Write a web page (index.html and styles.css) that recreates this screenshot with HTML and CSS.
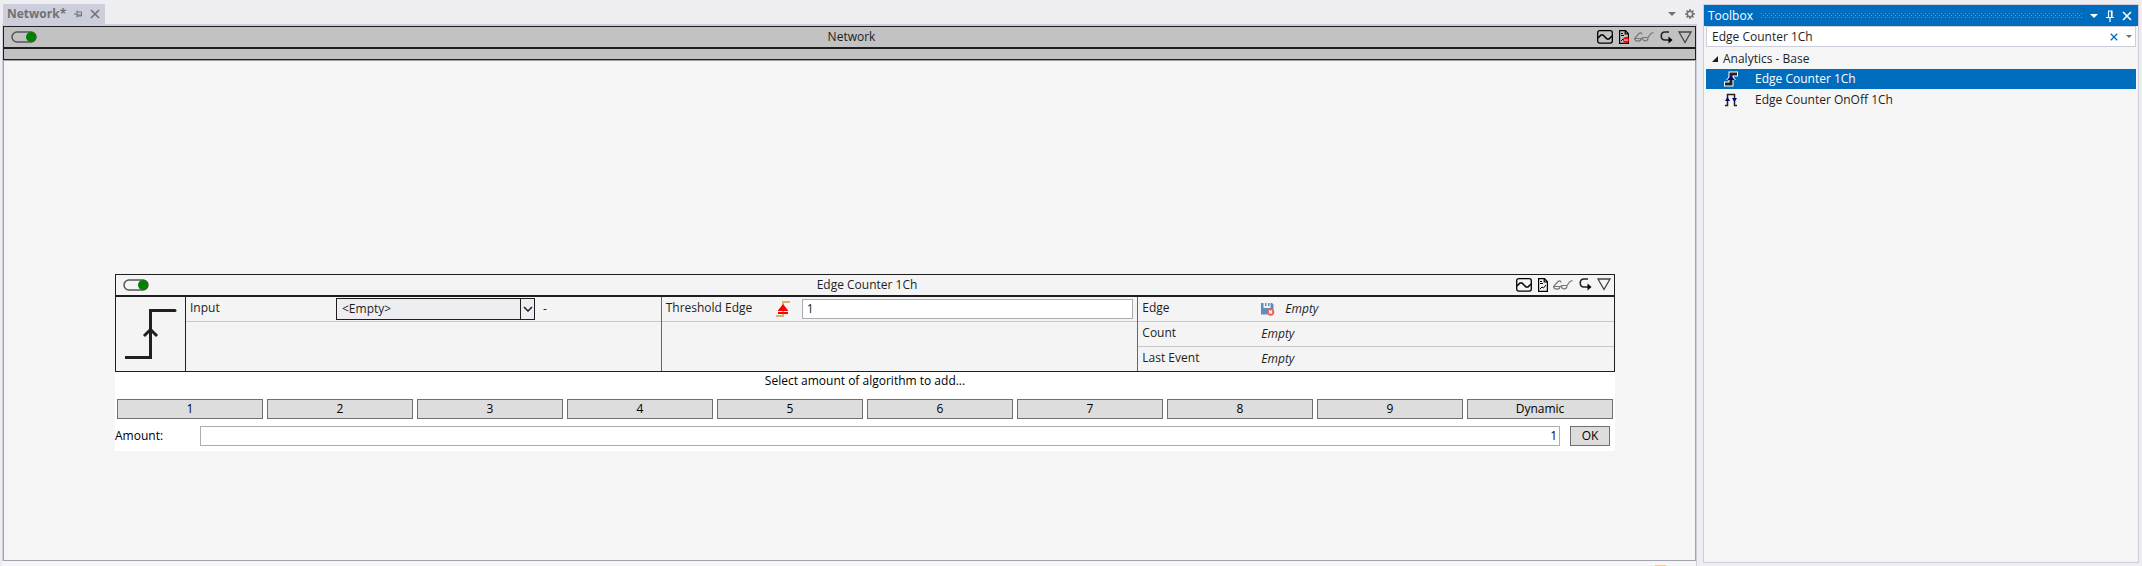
FILE: index.html
```html
<!DOCTYPE html>
<html lang="en">
<head>
    <meta charset="UTF-8">
    <meta name="viewport" content="width=device-width, initial-scale=1.0">
    <title>Network</title>
    <link rel="stylesheet" href="styles.css">
</head>
<body>
    <svg width="0" height="0" class="defs">
        <symbol id="toggle" viewBox="0 0 26 12">
            <rect x="1" y="1" width="24" height="10" rx="5" fill="none" stroke="#555" stroke-width="1.5"/>
            <circle cx="20" cy="6" r="5" fill="#008000"/>
        </symbol>
        <symbol id="wave" viewBox="0 0 16 14">
            <rect x="0.7" y="0.7" width="14.6" height="12.4" rx="2" fill="none" stroke="#000" stroke-width="1.3"/>
            <path d="M1 8L4 5H6L10 9H12L15 6" fill="none" stroke="#000" stroke-width="1.5"/>
        </symbol>
        <symbol id="report" viewBox="0 0 10 14">
            <path d="M0.6 0.6H6.5L9.4 3.8V13.4H0.6ZM6.2 1V4H9" fill="none" stroke="#000" stroke-width="1.2"/>
            <path d="M2 3.500H4M2 5.500H5M2 11L4 9L5.500 10L8 7" fill="none" stroke="#000"/>
        </symbol>
        <symbol id="glasses" viewBox="0 0 20 12">
            <path d="M0.500 7.500H7C7 11 1 11 0.500 7.500L5 2.500C6 1.500 8 1.500 8 3.500M7 7.500L9 6.500M8.500 6.500H14C14 11 8.500 11 8.500 6.500M14 6.500L17 2.500L19.500 1.500" fill="none" stroke="#777" stroke-width="1.2"/>
        </symbol>
        <symbol id="loop" viewBox="0 0 13 13">
            <path d="M9 1H5C0 1 0 9 5 9H9" fill="none" stroke="#222" stroke-width="1.6"/>
            <path d="M8.500 5.500L12.500 9L8.500 12.500Z" fill="#000"/>
        </symbol>
        <symbol id="triangle" viewBox="0 0 14 13">
            <path d="M1 1H13L7 11.500Z" fill="none" stroke="#444" stroke-width="1.3"/>
        </symbol>
        <symbol id="cross" viewBox="0 0 10 10">
            <path d="M1 1L9 9M9 1L1 9" fill="none" stroke="currentColor" stroke-width="1.6"/>
        </symbol>
        <symbol id="pin" viewBox="0 0 8 12">
            <path d="M2 1H6V7M2.500 1V7M0 7.500H8M4 7.500V12M5.500 1V7" fill="none" stroke="currentColor" stroke-width="1.2"/>
        </symbol>
    </svg>

    <main class="editor">
        <div class="tab-strip">
            <div class="tab">
                <span class="tab-title">Network*</span>
                <button class="icon-button" aria-label="Pin tab">
                    <svg width="8" height="8" viewBox="0 0 8 8"><path d="M0 4H3M3 0.500V7.500M3 2H7.500V6H3M3 5H7.500" fill="none" stroke="currentColor"/></svg>
                </button>
                <button class="icon-button" aria-label="Close tab"><svg width="10" height="10"><use href="#cross"/></svg></button>
            </div>
            <div class="strip-tools">
                <button class="icon-button" aria-label="Open documents"><svg width="8" height="4"><path d="M0 0H8L4 4Z" fill="#717171"/></svg></button>
                <button class="icon-button" aria-label="Options">
                    <svg width="10" height="10" viewBox="0 0 10 10"><circle cx="5" cy="5" r="2.700" fill="none" stroke="#717171" stroke-width="1.500"/><path d="M5 0V2M5 8V10M0 5H2M8 5H10M1.500 1.500L3 3M7 7L8.500 8.500M8.500 1.500L7 3M3 7L1.500 8.500" stroke="#717171" stroke-width="1.500"/></svg>
                </button>
            </div>
        </div>

        <section class="network">
            <header class="block-header">
                <button class="icon-button" aria-label="Enabled"><svg width="26" height="12"><use href="#toggle"/></svg></button>
                <h1 class="block-title">Network</h1>
                <div class="block-tools">
                    <svg width="16" height="14"><use href="#wave"/></svg>
                    <svg width="10" height="14"><use href="#report"/><circle cx="7" cy="10" r="3" fill="#f00"/><path d="M5 10H9" stroke="#fff"/></svg>
                    <svg width="20" height="12"><use href="#glasses"/></svg>
                    <svg width="13" height="13"><use href="#loop"/></svg>
                    <svg width="14" height="13"><use href="#triangle"/></svg>
                </div>
            </header>
            <div class="network-bar"></div>

            <div class="canvas">
                <article class="algorithm">
                    <header class="block-header">
                        <button class="icon-button" aria-label="Enabled"><svg width="26" height="12"><use href="#toggle"/></svg></button>
                        <h2 class="block-title">Edge Counter 1Ch</h2>
                        <div class="block-tools">
                            <svg width="16" height="14"><use href="#wave"/></svg>
                            <svg width="10" height="14"><use href="#report"/></svg>
                            <svg width="20" height="12"><use href="#glasses"/></svg>
                            <svg width="13" height="13"><use href="#loop"/></svg>
                            <svg width="14" height="13"><use href="#triangle"/></svg>
                        </div>
                    </header>
                    <div class="algorithm-body">
                        <div class="symbol">
                            <svg width="52" height="52" viewBox="0 0 52 52"><path d="M0 49.500H25.500V2.500H50M19 28L25.500 21.500L32 28" fill="none" stroke="#231f20" stroke-width="3"/><path d="M49 1H50a1 1 0 0 1 0 3H49" fill="#231f20"/></svg>
                        </div>
                        <div class="column">
                            <div class="row inputs">
                                <label for="input">Input</label>
                                <div class="combo">
                                    <select id="input"><option>&lt;Empty&gt;</option></select>
                                    <span class="combo-arrow"><svg width="10" height="6"><path d="M1 1L5 5L9 1" fill="none" stroke="#1e1e1e" stroke-width="1.500"/></svg></span>
                                </div>
                                <span class="unit">-</span>
                            </div>
                        </div>
                        <div class="column">
                            <div class="row params">
                                <label for="threshold">Threshold Edge</label>
                                <svg width="14" height="16" viewBox="0 0 14 16"><path d="M0 15H7V1H14" fill="none" stroke="#deb070" stroke-width="2"/><path d="M7 3L12.500 10H1.500ZM2 11H12V13H2Z" fill="#f00"/></svg>
                                <input id="threshold" type="text" value="1">
                            </div>
                        </div>
                        <div class="column">
                            <div class="row outputs">
                                <span>Edge</span>
                                <span class="value">
                                    <svg width="14" height="14" viewBox="0 0 14 14"><path d="M0 1H2.500V6H9.500V1H11L12.500 2.500V7H8L6 9V12.500H0Z" fill="#5b8fc0"/><path d="M4 1H5.500V4H4ZM7 1H8.500V4H7Z" fill="#5b8fc0"/><circle cx="9.500" cy="10" r="3.800" fill="#e5615d"/><path d="M8 8.500L11 11.500M11 8.500L8 11.500" stroke="#fff" stroke-width="1.300"/></svg>
                                    <em>Empty</em>
                                </span>
                            </div>
                            <div class="row outputs"><span>Count</span><span class="value"><em>Empty</em></span></div>
                            <div class="row outputs"><span>Last Event</span><span class="value"><em>Empty</em></span></div>
                        </div>
                    </div>
                </article>

                <form class="amount-panel">
                    <p class="prompt">Select amount of algorithm to add...</p>
                    <div class="amounts">
                        <button type="button">1</button>
                        <button type="button">2</button>
                        <button type="button">3</button>
                        <button type="button">4</button>
                        <button type="button">5</button>
                        <button type="button">6</button>
                        <button type="button">7</button>
                        <button type="button">8</button>
                        <button type="button">9</button>
                        <button type="button">Dynamic</button>
                    </div>
                    <div class="custom-amount">
                        <label for="amount">Amount:</label>
                        <input id="amount" type="text" value="1">
                        <button type="button">OK</button>
                    </div>
                </form>
            </div>
        </section>
        <div class="status"><span class="status-mark"></span></div>
    </main>

    <aside class="toolbox">
        <header class="toolbox-header">
            <h2>Toolbox</h2>
            <svg class="grip" height="5" width="100%">
                <pattern id="dots" width="4" height="4" patternUnits="userSpaceOnUse"><path d="M0 0h1v1H0zM2 2h1v1H2z" fill="#59a8de"/></pattern>
                <rect width="100%" height="5" fill="url(#dots)"/>
            </svg>
            <button class="icon-button" aria-label="Window position"><svg width="8" height="4"><path d="M0 0H8L4 4Z" fill="#fff"/></svg></button>
            <button class="icon-button" aria-label="Auto hide"><svg width="8" height="12"><use href="#pin"/></svg></button>
            <button class="icon-button" aria-label="Close"><svg width="10" height="10"><use href="#cross"/></svg></button>
        </header>
        <div class="search">
            <input type="text" value="Edge Counter 1Ch" aria-label="Search Toolbox">
            <button class="icon-button clear" aria-label="Clear search"><svg width="8" height="8"><use href="#cross"/></svg></button>
            <button class="icon-button" aria-label="Search options"><svg width="6" height="3"><path d="M0 0H6L3 3Z" fill="#717171"/></svg></button>
        </div>
        <h3 class="category"><svg width="6" height="6"><path d="M6 0V6H0Z" fill="#1e1e1e"/></svg>Analytics - Base</h3>
        <ul class="items">
            <li class="selected">
                <svg width="16" height="16" viewBox="0 0 16 16"><path d="M1 13H8V3H15" fill="none" stroke="#fff" stroke-width="5"/><path d="M3 9L8 3L13 9Z" fill="#fff"/><path d="M2 13H8V3H14" fill="none" stroke="#222" stroke-width="3"/><path d="M8 5L12 9H4Z" fill="#00008b"/></svg>
                Edge Counter 1Ch
            </li>
            <li>
                <svg width="16" height="16" viewBox="0 0 16 16"><path d="M2 13.500H4.500V2.500H11.500V13.500H14" fill="none" stroke="#222" stroke-width="1.500"/><path d="M4.500 5L7 9H2ZM11.500 10L14 6H9Z" fill="#00008b"/></svg>
                Edge Counter OnOff 1Ch
            </li>
        </ul>
    </aside>
</body>
</html>
```
FILE: styles.css
```css
* {
    box-sizing: border-box;
}
body {
    display: flex;
    gap: 6px;
    height: 100vh;
    margin: 0;
    padding: 4px 3px 0 2px;
    background: #eeeef2;
    color: #1e1e1e;
    font-family: "Open Sans", "Noto Sans", sans-serif;
    font-size: 12px;
    line-height: 16px;
}
h1, h2, h3, p, ul {
    margin: 0;
    padding: 0;
    font-size: 12px;
    font-weight: normal;
}
input, select, button {
    font: inherit;
    color: inherit;
    border-radius: 0;
}
svg {
    display: block;
    flex: none;
}
.defs {
    position: absolute;
}
.icon-button {
    padding: 0;
    border: none;
    background: none;
}
.editor {
    flex: 1;
    display: flex;
    flex-direction: column;
    min-width: 0;
}
.tab-strip {
    display: flex;
    justify-content: space-between;
    height: 22px;
    border-bottom: 2px solid #cccedb;
}
.tab {
    display: flex;
    align-items: center;
    gap: 8px;
    margin-left: 1px;
    padding: 0 5px 0 4px;
    background: #cccedb;
    color: #717171;
}
.tab-title {
    font-weight: bold;
}
.strip-tools {
    display: flex;
    align-items: center;
    gap: 9px;
    padding-right: 2px;
}
.network {
    flex: 1;
    display: flex;
    flex-direction: column;
    border: 1px solid #cccedb;
    border-width: 0 1px;
}
.block-header {
    display: grid;
    grid-template-columns: 110px 1fr 110px;
    align-items: center;
    height: 23px;
    padding: 0 3px 0 7px;
    border: 1px solid #1e1e1e;
    border-bottom-width: 2px;
}
.network > .block-header {
    background: #c2c2c2;
}
.block-title {
    text-align: center;
}
.block-tools {
    display: flex;
    align-items: center;
    justify-content: space-between;
    padding-left: 15px;
}
.network-bar {
    height: 11px;
    background: #c2c2c2;
    border: 1px solid #1e1e1e;
    border-top: none;
}
.canvas {
    flex: 1;
    display: flex;
    flex-direction: column;
    justify-content: center;
    padding: 103px 80px 0 111px;
    background: #f5f5f5;
    border: 1px solid #a2a4ad;
}
.algorithm {
    background: #f4f4f4;
}
.algorithm-body {
    display: grid;
    grid-template-columns: 70px 475fr 477fr 477fr;
    min-height: 75px;
    border: 1px solid #1e1e1e;
    border-top: none;
}
.symbol {
    display: flex;
    align-items: center;
    justify-content: center;
    border-right: 1px solid #1e1e1e;
}
.column + .column {
    border-left: 1px solid #666;
}
.row {
    display: grid;
    align-items: center;
    height: 25px;
    padding: 0 4px;
    border-bottom: 1px solid #c8c8c8;
}
.row > :first-child {
    align-self: start;
    padding-top: 3px;
}
.column .row:nth-child(3) {
    height: 24px;
    border-bottom: none;
}
.inputs {
    grid-template-columns: 146px 199px 1fr;
}
.params {
    grid-template-columns: 98px 14px 1fr;
    column-gap: 12px;
}
.outputs {
    grid-template-columns: 119px 1fr;
}
.value {
    display: flex;
    align-items: center;
    gap: 10px;
    padding-top: 1px;
}
.unit {
    padding-left: 8px;
}
.combo {
    display: grid;
    height: 22px;
    border: 1px solid #1e1e1e;
    background: #eeeef2;
}
.combo select {
    grid-area: 1 / 1;
    appearance: none;
    padding: 0 5px;
    border: none;
    background: none;
}
.combo-arrow {
    grid-area: 1 / 1;
    justify-self: end;
    display: flex;
    align-items: center;
    justify-content: center;
    width: 14px;
    border-left: 1px solid #1e1e1e;
    pointer-events: none;
}
.params input,
.custom-amount input {
    height: 20px;
    min-width: 0;
    padding: 0 4px;
    border: 1px solid #abadb3;
    background: #fff;
}
.amount-panel {
    background: #fff;
    color: #000;
}
.prompt {
    padding-top: 1px;
    text-align: center;
}
.amounts {
    display: grid;
    grid-template-columns: repeat(10, 1fr);
    gap: 4px;
    padding: 10px 2px 7px;
}
.amount-panel button {
    height: 20px;
    padding: 0;
    border: 1px solid #707070;
    background: #ddd;
}
.custom-amount {
    display: grid;
    grid-template-columns: 75px 1fr 40px;
    align-items: center;
    column-gap: 10px;
    padding: 0 5px 5px 0;
}
.custom-amount input {
    padding: 0 2px;
    text-align: right;
}
.status {
    display: flex;
    align-items: flex-end;
    justify-content: flex-end;
    height: 5px;
    padding-right: 30px;
    background: #f6f6f6;
    border-right: 1px solid #cccedb;
}
.status-mark {
    width: 11px;
    height: 1px;
    background: #f8cf86;
}
.toolbox {
    width: 436px;
    margin-bottom: 3px;
    border: 1px solid #cccedb;
    background: #f5f5f5;
}
.toolbox-header {
    display: flex;
    align-items: center;
    gap: 8px;
    height: 21px;
    padding: 0 6px 0 4px;
    background: #006cbe;
    color: #fff;
}
.grip {
    flex: 1;
    min-width: 0;
}
.search {
    display: flex;
    align-items: center;
    gap: 8px;
    height: 21px;
    margin: 0 2px;
    padding: 0 3px 0 5px;
    background: #fff;
    border: 1px solid #cccedb;
}
.search input {
    flex: 1;
    min-width: 0;
    padding: 0;
    border: none;
    outline: none;
}
.clear {
    color: #006cbe;
}
.category {
    display: flex;
    align-items: center;
    gap: 5px;
    height: 22px;
    padding: 2px 8px 0;
}
.items {
    margin: 0 2px;
    list-style: none;
}
.items li {
    display: flex;
    align-items: center;
    gap: 16px;
    height: 20px;
    margin-bottom: 1px;
    padding-left: 17px;
}
.items .selected {
    background: #006cbe;
    color: #fff;
}
```
